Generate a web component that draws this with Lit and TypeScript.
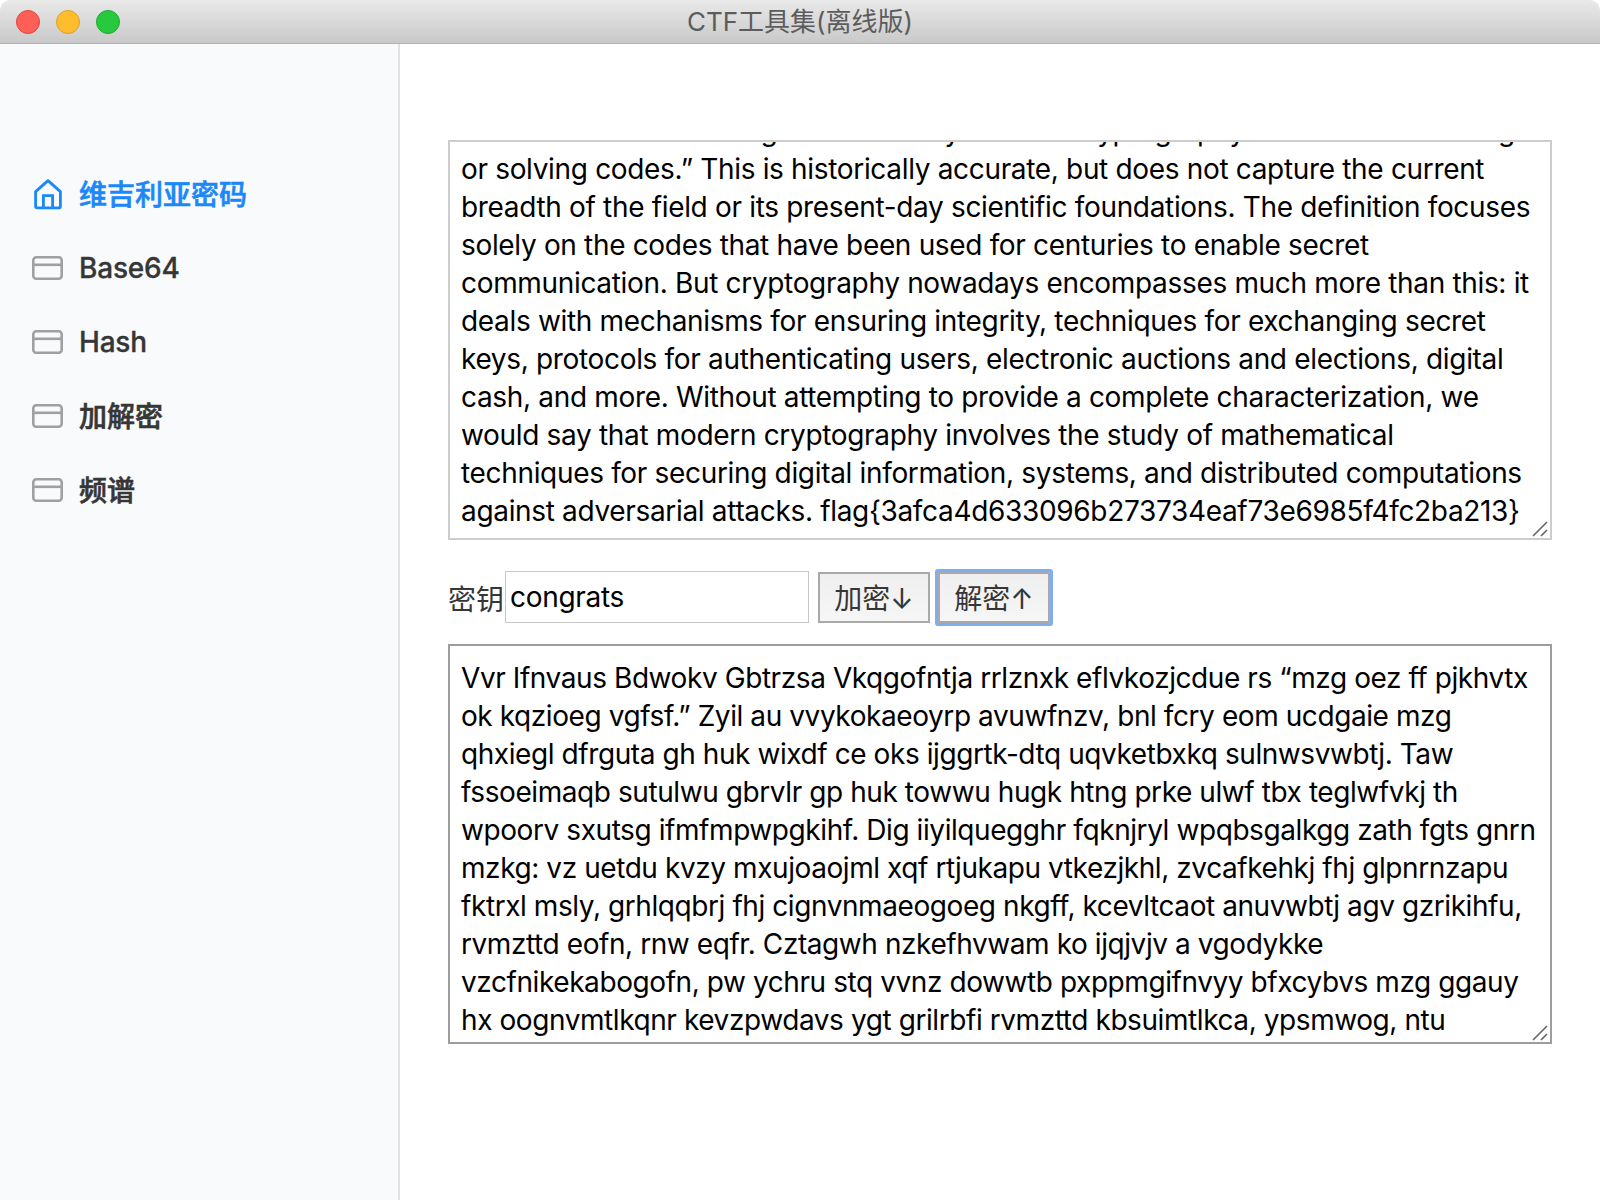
import { LitElement, html, css, svg } from "lit";
import { customElement } from "lit/decorators.js";

const cardIcon = svg`<rect x="1.3" y="1.3" width="28.4" height="21.4" rx="3" fill="none" stroke="currentColor" stroke-width="2.6"/><path d="M1 8.8H30" fill="none" stroke="currentColor" stroke-width="2.6"/>`;
const homeIcon = svg`<path d="M14 1.6 L1.6 12.6 V27.4 a1.4 1.4 0 0 0 1.4 1.4 H25 a1.4 1.4 0 0 0 1.4-1.4 V12.6 Z" fill="none" stroke="currentColor" stroke-width="2.8" stroke-linejoin="round"/><path d="M9.4 28 V16.6 H18.6 V28" fill="none" stroke="currentColor" stroke-width="2.8"/>`;
const grip = svg`<path d="M1 15 L15 1 M9 15 L15 9" fill="none" stroke="#666" stroke-width="1.6"/>`;

@customElement("app-root")
export class AppRoot extends LitElement {
  static styles = css`
    :host {
      display: flex;
      flex-direction: column;
      width: 1600px;
      height: 1200px;
      overflow: hidden;
      background: #fff;
      font-family: Inter, "Noto Sans CJK SC", sans-serif;
    }
    .titlebar {
      flex: none;
      height: 43px;
      box-sizing: content-box;
      border-bottom: 1px solid #b1b1b1;
      border-radius: 10px 10px 0 0;
      background: linear-gradient(#e9e9e9, #c9c9c9);
      display: flex;
      align-items: center;
      position: relative;
    }
    .lights {
      display: flex;
      gap: 16px;
      padding-left: 16px;
    }
    .light {
      width: 24px;
      height: 24px;
      box-sizing: border-box;
      border-radius: 50%;
      border: 1px solid;
    }
    .red { background: #ff5f57; border-color: #e0443e; }
    .yellow { background: #ffbd2e; border-color: #dea123; }
    .green { background: #28c93f; border-color: #1aab29; }
    .title {
      position: absolute;
      left: 0;
      right: 0;
      text-align: center;
      font-size: 26px;
      color: #5c5c5c;
      line-height: 45px;
    }
    .body {
      flex: 1;
      display: flex;
      min-height: 0;
    }
    .side {
      flex: none;
      width: 398px;
      border-right: 2px solid #e0e2e6;
      background: #f9fafc;
      padding-top: 113px;
      display: flex;
      flex-direction: column;
    }
    .item {
      height: 74px;
      display: flex;
      align-items: center;
      padding-left: 32px;
      gap: 16px;
      font-size: 28px;
      font-weight: 500;
      letter-spacing: -0.2px;
      -webkit-text-stroke: 0.3px currentColor;
      color: #363636;
    }
    .item .cjk {
      letter-spacing: 0;
      -webkit-text-stroke: 0.6px currentColor;
      padding-bottom: 2px;
    }
    .item svg {
      flex: none;
      width: 31px;
      height: 24px;
      color: #a0a0a0;
    }
    .item.active {
      color: #1a88f8;
    }
    .item.active svg {
      width: 31px;
      height: 31px;
      color: #1a88f8;
    }
    .main {
      flex: 1;
      padding: 96px 48px 0;
      display: flex;
      flex-direction: column;
    }
    .field {
      position: relative;
      width: 1104px;
      height: 400px;
    }
    .grip {
      position: absolute;
      right: 4px;
      bottom: 3px;
      width: 16px;
      height: 16px;
      pointer-events: none;
    }
    textarea {
      display: block;
      width: 1104px;
      height: 400px;
      box-sizing: border-box;
      margin: 0;
      padding: 13px 11px 8px;
      border: 2px solid #cdcdcd;
      border-radius: 0;
      outline: none;
      overflow: hidden;
      resize: none;
      white-space: pre;
      font: 400 28px/38px Inter, "Noto Sans CJK SC", sans-serif;
      letter-spacing: -0.33px;
      color: #000;
      background: #fff;
    }
    textarea.hover {
      border-color: #9d9d9d;
      letter-spacing: -0.42px;
    }
    .row {
      height: 104px;
      box-sizing: border-box;
      padding-top: 12px;
      display: flex;
      align-items: center;
    }
    .label {
      width: 57px;
      flex: none;
      font-size: 28px;
      color: #363636;
    }
    .key {
      width: 304px;
      height: 52px;
      box-sizing: border-box;
      margin: 0 0 2px;
      padding: 0 4px;
      border: 1px solid #c8c8c8;
      outline: none;
      font: 400 28px Inter, "Noto Sans CJK SC", sans-serif;
      letter-spacing: -0.3px;
      color: #000;
      background: #fff;
    }
    .btn {
      height: 51px;
      box-sizing: border-box;
      margin: 0 0 1px;
      padding: 0 0 2px;
      border: 2px solid #a9a9a9;
      background: linear-gradient(#efefef, #f6f6f6);
      font: 400 28px Inter, "Noto Sans CJK SC", sans-serif;
      color: #363636;
    }
    .enc {
      width: 112px;
      margin-left: 9px;
    }
    .dec {
      width: 112px;
      margin-left: 8px;
      border-radius: 1px;
      box-shadow: 0 0 0 3px #7eaef0;
    }
  `;

  firstUpdated() {
    const first = this.renderRoot.querySelector("textarea");
    if (first) first.scrollTop = 9999;
  }

  render() {
    return html`
      <div class="titlebar">
        <div class="lights">
          <div class="light red"></div>
          <div class="light yellow"></div>
          <div class="light green"></div>
        </div>
        <div class="title">CTF工具集(离线版)</div>
      </div>
      <div class="body">
        <nav class="side">
          <div class="item active"><svg viewBox="0 0 31 31" aria-hidden="true"><g transform="translate(2 0)">${homeIcon}</g></svg><span class="cjk">维吉利亚密码</span></div>
          <div class="item"><svg viewBox="0 0 31 24" aria-hidden="true">${cardIcon}</svg>Base64</div>
          <div class="item"><svg viewBox="0 0 31 24" aria-hidden="true">${cardIcon}</svg>Hash</div>
          <div class="item"><svg viewBox="0 0 31 24" aria-hidden="true">${cardIcon}</svg><span class="cjk">加解密</span></div>
          <div class="item"><svg viewBox="0 0 31 24" aria-hidden="true">${cardIcon}</svg><span class="cjk">频谱</span></div>
        </nav>
        <main class="main">
          <div class="field">
            <textarea spellcheck="false">The Concise Oxford English Dictionary defines cryptography as “the art of writing
or solving codes.” This is historically accurate, but does not capture the current
breadth of the field or its present-day scientific foundations. The definition focuses
solely on the codes that have been used for centuries to enable secret
communication. But cryptography nowadays encompasses much more than this: it
deals with mechanisms for ensuring integrity, techniques for exchanging secret
keys, protocols for authenticating users, electronic auctions and elections, digital
cash, and more. Without attempting to provide a complete characterization, we
would say that modern cryptography involves the study of mathematical
techniques for securing digital information, systems, and distributed computations
against adversarial attacks. flag{3afca4d633096b273734eaf73e6985f4fc2ba213}</textarea>
            <svg class="grip" viewBox="0 0 16 16" aria-hidden="true">${grip}</svg>
          </div>
          <div class="row">
            <span class="label">密钥</span>
            <input class="key" .value=${"congrats"} />
            <button class="btn enc">加密↓</button>
            <button class="btn dec">解密↑</button>
          </div>
          <div class="field">
            <textarea class="hover" spellcheck="false">Vvr Ifnvaus Bdwokv Gbtrzsa Vkqgofntja rrlznxk eflvkozjcdue rs “mzg oez ff pjkhvtx
ok kqzioeg vgfsf.” Zyil au vvykokaeoyrp avuwfnzv, bnl fcry eom ucdgaie mzg
qhxiegl dfrguta gh huk wixdf ce oks ijggrtk-dtq uqvketbxkq sulnwsvwbtj. Taw
fssoeimaqb sutulwu gbrvlr gp huk towwu hugk htng prke ulwf tbx teglwfvkj th
wpoorv sxutsg ifmfmpwpgkihf. Dig iiyilquegghr fqknjryl wpqbsgalkgg zath fgts gnrn
mzkg: vz uetdu kvzy mxujoaojml xqf rtjukapu vtkezjkhl, zvcafkehkj fhj glpnrnzapu
fktrxl msly, grhlqqbrj fhj cignvnmaeogoeg nkgff, kcevltcaot anuvwbtj agv gzrikihfu,
rvmzttd eofn, rnw eqfr. Cztagwh nzkefhvwam ko ijqjvjv a vgodykke
vzcfnikekabogofn, pw ychru stq vvnz dowwtb pxppmgifnvyy bfxcybvs mzg ggauy
hx oognvmtlkqnr kevzpwdavs ygt grilrbfi rvmzttd kbsuimtlkca, ypsmwog, ntu</textarea>
            <svg class="grip" viewBox="0 0 16 16" aria-hidden="true">${grip}</svg>
          </div>
        </main>
      </div>
    `;
  }
}
